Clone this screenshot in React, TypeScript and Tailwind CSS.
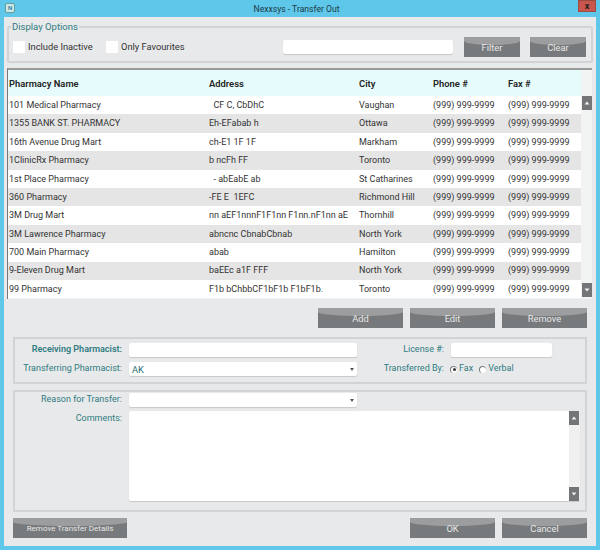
const rows = [
  ["101 Medical Pharmacy", "  CF C, CbDhC", "Vaughan"],
  ["1355 BANK ST. PHARMACY", "Eh-EFabab h", "Ottawa"],
  ["16th Avenue Drug Mart", "ch-E1 1F 1F", "Markham"],
  ["1ClinicRx Pharmacy", "b ncFh FF", "Toronto"],
  ["1st Place Pharmacy", "  - abEabE ab", "St Catharines"],
  ["360 Pharmacy", "-FE E  1EFC", "Richmond Hill"],
  ["3M Drug Mart", "nn aEF1nnnF1F1nn F1nn.nF1nn aE", "Thornhill"],
  ["3M Lawrence Pharmacy", "abncnc CbnabCbnab", "North York"],
  ["700 Main Pharmacy", "abab", "Hamilton"],
  ["9-Eleven Drug Mart", "baEEc a1F FFF", "North York"],
  ["99 Pharmacy", "F1b bChbbCF1bF1b F1bF1b.", "Toronto"],
];

const GrayButton = ({ label, className, textSize = "text-[9.3px]" }: { label: string; className: string; textSize?: string }) => (
  <button type="button" className={`relative flex h-[20px] items-center justify-center overflow-hidden bg-[#777a7c] text-[#e8e8e8] ${textSize} ${className}`}>
    <span className="absolute inset-x-0 top-0 h-[8px] rounded-b-[50%_4px] bg-[#9b9d9f]" />
    <span className="relative pt-[2px]">{label}</span>
  </button>
);

const ScrollBtn = ({ up }: { up?: boolean }) => (
  <span className="flex h-[14px] w-[10px] shrink-0 items-center justify-center bg-[#737578]">
    <svg width="6" height="4" viewBox="0 0 6 4">
      <path d={up ? "M3 0.5 L5.5 3.5 L0.5 3.5 Z" : "M3 3.5 L5.5 0.5 L0.5 0.5 Z"} fill="#f0f0f0" />
    </svg>
  </span>
);

const Combo = ({ value, className }: { value?: string; className: string }) => (
  <div className={`flex h-[14px] items-center justify-between rounded-[2px] bg-white pl-[3px] pr-[3px] text-[9.3px] text-[#2f6f75] shadow-[0_1px_1px_#c8c8c8] ${className}`}>
    <span className="pt-[1px]">{value}</span>
    <svg width="4" height="3" viewBox="0 0 4 3" className="mt-[1px]">
      <path d="M0 0 L4 0 L2 3 Z" fill="#555" />
    </svg>
  </div>
);

const Field = ({ className }: { className: string }) => (
  <div className={`h-[14px] rounded-[2px] bg-white shadow-[0_1px_1px_#c8c8c8] ${className}`} />
);

const Radio = ({ checked }: { checked?: boolean }) => (
  <span className="flex h-[7px] w-[7px] items-center justify-center rounded-full border-l border-t border-[#777] bg-white">
    {checked && <span className="h-[3px] w-[3px] rounded-full bg-[#333]" />}
  </span>
);

export default function App() {
  return (
    <div className="flex h-[550px] w-[600px] flex-col overflow-hidden whitespace-nowrap bg-[#5fc7ea] font-['Roboto','Noto_Sans',sans-serif] text-[9px] text-[#333]">
      {/* title bar */}
      <div className="flex h-[17px] shrink-0 items-start pl-[5px] pr-[4px]">
        <div className="mt-[3px] flex h-[10px] w-[10px] items-center justify-center rounded-[2px] border border-[#5f9f9f] bg-[#cfe9e9] text-[6px] font-bold leading-none text-[#3a7f9f]">
          N
        </div>
        <div className="flex-1 pt-[1px] text-center text-[8.6px] leading-[16px] text-[#1c3a46]">Nexxsys - Transfer Out</div>
        <div className="flex h-[12px] w-[18px] items-center justify-center border border-[#9c4a42] bg-[#c9564c] text-[9px] font-bold leading-none text-[#222]">
          x
        </div>
      </div>

      <div className="mx-[4px] flex h-[529px] w-[592px] flex-col bg-[#e8e9eb] pl-[3px] pr-[3px]">
        {/* display options */}
        <fieldset className="mt-[5px] h-[41px] shrink-0 rounded-[2px] border-2 border-[#d2d3d5] pl-[4px]">
          <legend className="-ml-[2px] px-[1px] text-[9.5px] leading-[10px] text-[#2f7c80]">Display Options</legend>
          <div className="mt-[5px] flex items-center text-[9.3px]">
            <span className="h-[12px] w-[12px] rounded-[1px] bg-white" />
            <span className="ml-[3px] w-[78px]">Include Inactive</span>
            <span className="h-[12px] w-[12px] rounded-[1px] bg-white" />
            <span className="ml-[3px] w-[162px]">Only Favourites</span>
            <Field className="w-[170px]" />
            <GrayButton label="Filter" className="ml-[11px] w-[56px]" />
            <GrayButton label="Clear" className="ml-[10px] w-[56px]" />
          </div>
        </fieldset>

        {/* pharmacy table */}
        <div className="mt-[5px] flex h-[231px] w-[585px] shrink-0 border-l border-t-2 border-l-[#777] border-t-[#999] bg-[#f2f3f3]">
          <div className="w-[573px]">
            <div className="flex h-[26px] items-center bg-[#e6fbfb] pt-[2px] text-[9.4px] font-semibold text-[#222]">
              <span className="w-[200px] pl-[1px]">Pharmacy Name</span>
              <span className="w-[150px] pl-[1px]">Address</span>
              <span className="w-[74px] pl-[1px]">City</span>
              <span className="w-[75px] pl-[1px]">Phone #</span>
              <span className="w-[74px] pl-[1px]">Fax #</span>
            </div>
            {rows.map((r, i) => (
              <div key={r[0]} className={`flex h-[18.4px] items-center whitespace-pre pt-[1px] ${i % 2 === 0 ? "bg-white" : "bg-[#e5e5e5]"}`}>
                <span className="w-[200px] pl-[1px]">{r[0]}</span>
                <span className="w-[150px] pl-[1px]">{r[1]}</span>
                <span className="w-[74px] pl-[1px]">{r[2]}</span>
                <span className="w-[75px] pl-[1px]">(999) 999-9999</span>
                <span className="w-[74px] pl-[1px]">(999) 999-9999</span>
              </div>
            ))}
          </div>
          <div className="flex w-[11px] flex-col justify-between pb-[2px] pl-[1px] pt-[26px]">
            <ScrollBtn up />
            <ScrollBtn />
          </div>
        </div>

        <div className="mt-[9px] flex shrink-0 justify-end gap-[7px] pr-[6px]">
          <GrayButton label="Add" className="w-[85px]" />
          <GrayButton label="Edit" className="w-[85px]" />
          <GrayButton label="Remove" className="w-[85px]" />
        </div>

        {/* pharmacist details */}
        <div className="ml-[6px] mt-[9px] flex h-[47px] w-[574px] shrink-0 flex-col gap-[5px] border-2 border-[#d2d3d5] pt-[4px] text-[#2f7c80]">
          <div className="flex h-[14px] items-center">
            <span className="w-[107px] text-right font-semibold">Receiving Pharmacist:</span>
            <Field className="ml-[7px] w-[228px]" />
            <span className="w-[87px] text-right">License #:</span>
            <Field className="ml-[7px] w-[101px]" />
          </div>
          <div className="flex h-[14px] items-center">
            <span className="w-[107px] text-right">Transferring Pharmacist:</span>
            <Combo value="AK" className="ml-[7px] w-[228px]" />
            <span className="w-[87px] text-right">Transferred By:</span>
            <span className="ml-[6px] flex items-center gap-[2px]">
              <Radio checked />
              <span>Fax</span>
            </span>
            <span className="ml-[6px] flex items-center gap-[2px]">
              <Radio />
              <span>Verbal</span>
            </span>
          </div>
        </div>

        {/* transfer reason */}
        <div className="ml-[6px] mt-[6px] flex h-[122px] w-[574px] shrink-0 flex-col gap-[4px] border-2 border-[#d2d3d5] pt-[1px] text-[#2f7c80]">
          <div className="flex h-[14px] items-center">
            <span className="w-[107px] text-right">Reason for Transfer:</span>
            <Combo className="ml-[7px] w-[228px]" />
          </div>
          <div className="flex">
            <span className="w-[107px] text-right leading-[14px]">Comments:</span>
            <div className="ml-[7px] flex h-[90px] w-[451px] justify-between rounded-[2px] bg-white shadow-[0_1px_1px_#c8c8c8]">
              <span />
              <div className="flex w-[11px] flex-col justify-between bg-[#f0f0f0]">
                <ScrollBtn up />
                <ScrollBtn />
              </div>
            </div>
          </div>
        </div>

        <div className="ml-[6px] mt-[6px] flex w-[574px] shrink-0 gap-[7px]">
          <GrayButton label="Remove Transfer Details" className="w-[114px]" textSize="text-[8px]" />
          <span className="flex-1" />
          <GrayButton label="OK" className="w-[85px]" />
          <GrayButton label="Cancel" className="w-[85px]" />
        </div>
      </div>
    </div>
  );
}
